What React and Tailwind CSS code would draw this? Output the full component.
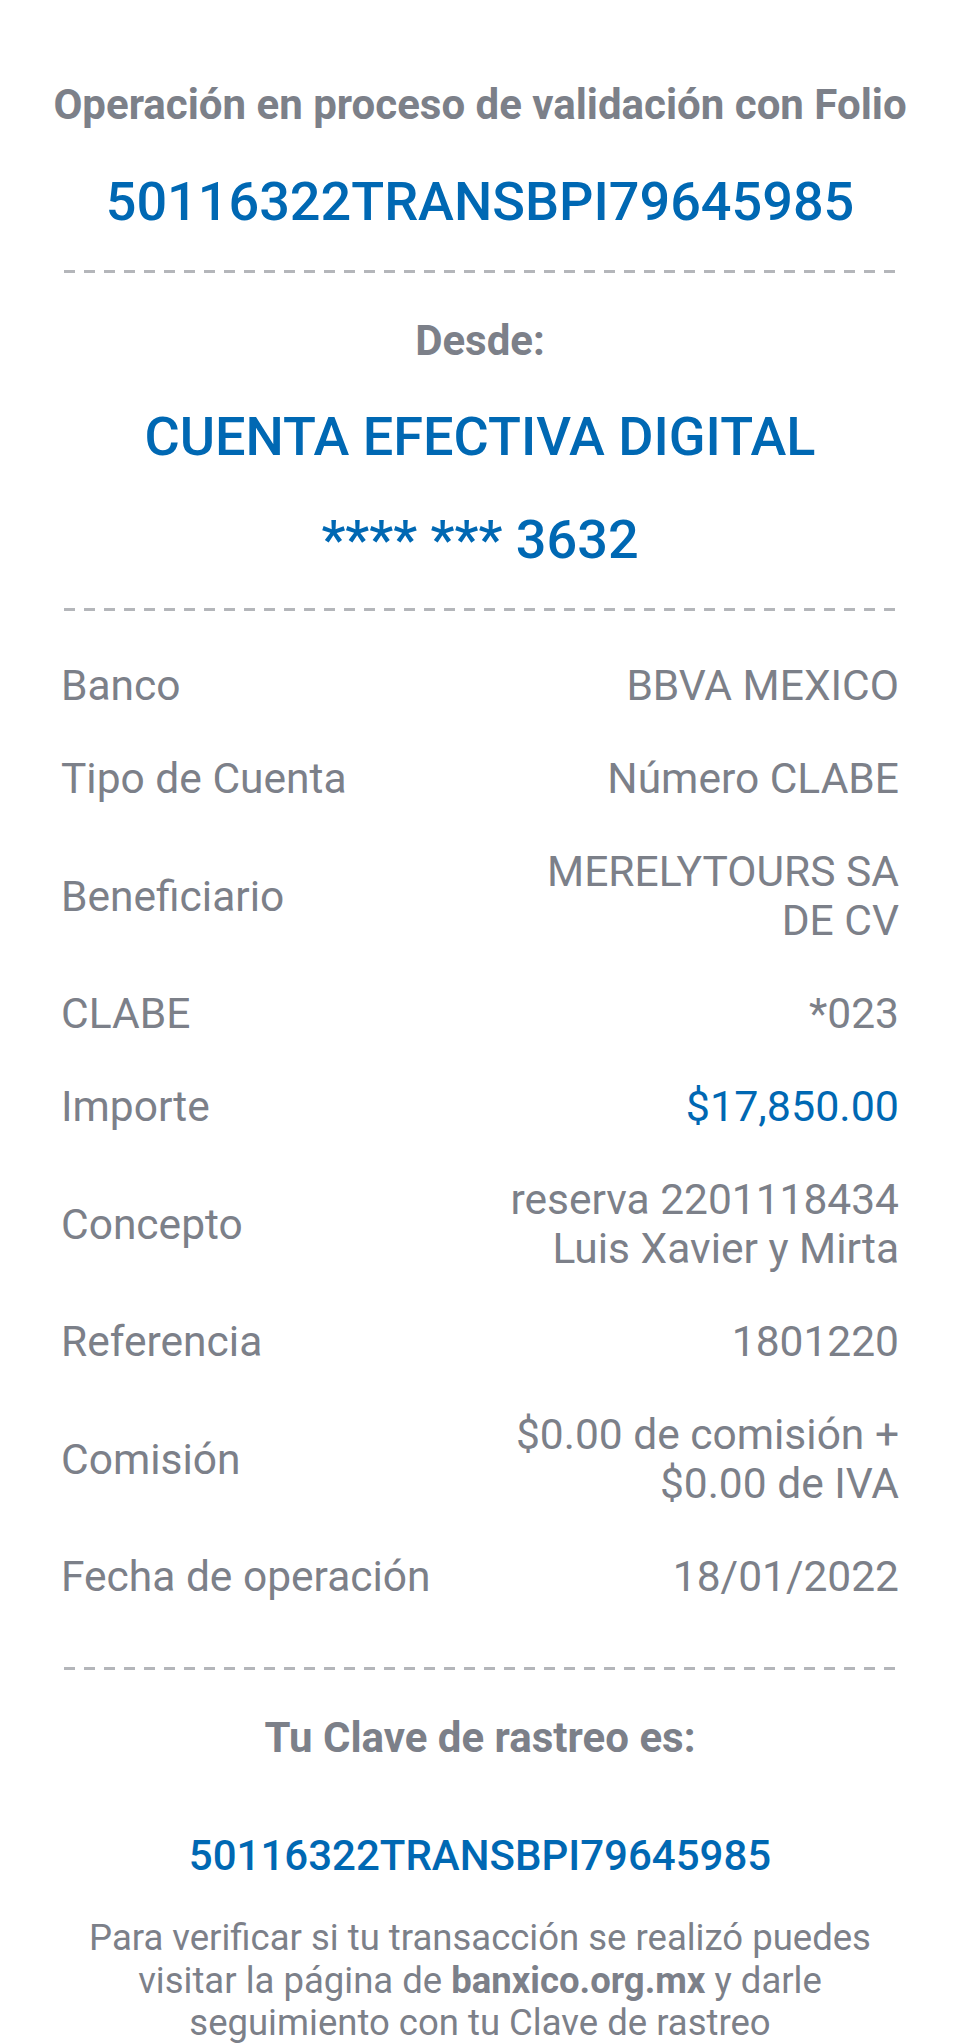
import React from "react";

const folio = "50116322TRANSBPI79645985";

const rows = [
  { label: "Banco", value: ["BBVA MEXICO"] },
  { label: "Tipo de Cuenta", value: ["Número CLABE"] },
  { label: "Beneficiario", value: ["MERELYTOURS SA DE CV"] },
  { label: "CLABE", value: ["*023"] },
  { label: "Importe", value: ["$17,850.00"], blue: true },
  { label: "Concepto", value: ["reserva 2201118434 Luis Xavier y Mirta"] },
  { label: "Referencia", value: ["1801220"] },
  { label: "Comisión", value: ["$0.00 de comisión + $0.00 de IVA"] },
  { label: "Fecha de operación", value: ["18/01/2022"] },
];

// --- Separador punteado ---
const Dashed = ({ className = "" }) => (
  <div
    className={`mx-[3px] h-[3px] bg-[repeating-linear-gradient(90deg,#b4b6ba_0_11px,transparent_11px_20px)] ${className}`}
  />
);

const DetailRow = ({ row }) => (
  <div className="grid grid-cols-[1fr_400px] items-center text-[42.5px] leading-[49px]">
    <span>{row.label}</span>
    <span className={`text-right ${row.blue ? "text-[43px] text-[#0068b3]" : ""}`}>
      {row.value}
    </span>
  </div>
);

export default function App() {
  return (
    <main className="min-h-screen bg-white font-['Roboto',sans-serif] text-[#7c8089]">
      <div className="px-[40px] pt-[80px] pb-10">
        <h1 className="text-center whitespace-nowrap text-[42px] leading-[49px] font-bold">
          Operación en proceso de validación con Folio
        </h1>
        <p className="mt-[41px] text-center text-[54px] leading-[63px] font-medium text-[#0068b3]">
          {folio}
        </p>

        <div className="px-[21px]">
          <Dashed className="mt-[37px]" />

          {/* Cuenta de origen */}
          <p className="mt-[43px] text-center text-[42px] leading-[49px] font-bold">
            Desde:
          </p>
          <p className="mt-[40px] text-center text-[54px] leading-[63px] font-medium text-[#0068b3]">
            CUENTA EFECTIVA DIGITAL
          </p>
          <p className="mt-[40px] text-center text-[54px] leading-[63px] font-medium text-[#0068b3]">
            **** *** 3632
          </p>

          <Dashed className="mt-[37px]" />

          {/* Detalle de la operación */}
          <div className="mt-[50px] flex flex-col gap-[44px]">
            {rows.map((row) => (
              <DetailRow key={row.label} row={row} />
            ))}
          </div>

          <Dashed className="mt-[66px]" />

          <p className="mt-[43px] text-center text-[42px] leading-[49px] font-bold">
            Tu Clave de rastreo es:
          </p>
          <p className="mt-[69px] text-center text-[42px] leading-[49px] font-medium text-[#0068b3]">
            {folio}
          </p>
          <p className="mt-[37px] text-center text-[36.5px] leading-[42.5px]">
            Para verificar si tu transacción se realizó puedes visitar la página de{" "}
            <span className="font-bold">banxico.org.mx</span> y darle seguimiento con tu
            Clave de rastreo
          </p>
        </div>
      </div>
    </main>
  );
}
